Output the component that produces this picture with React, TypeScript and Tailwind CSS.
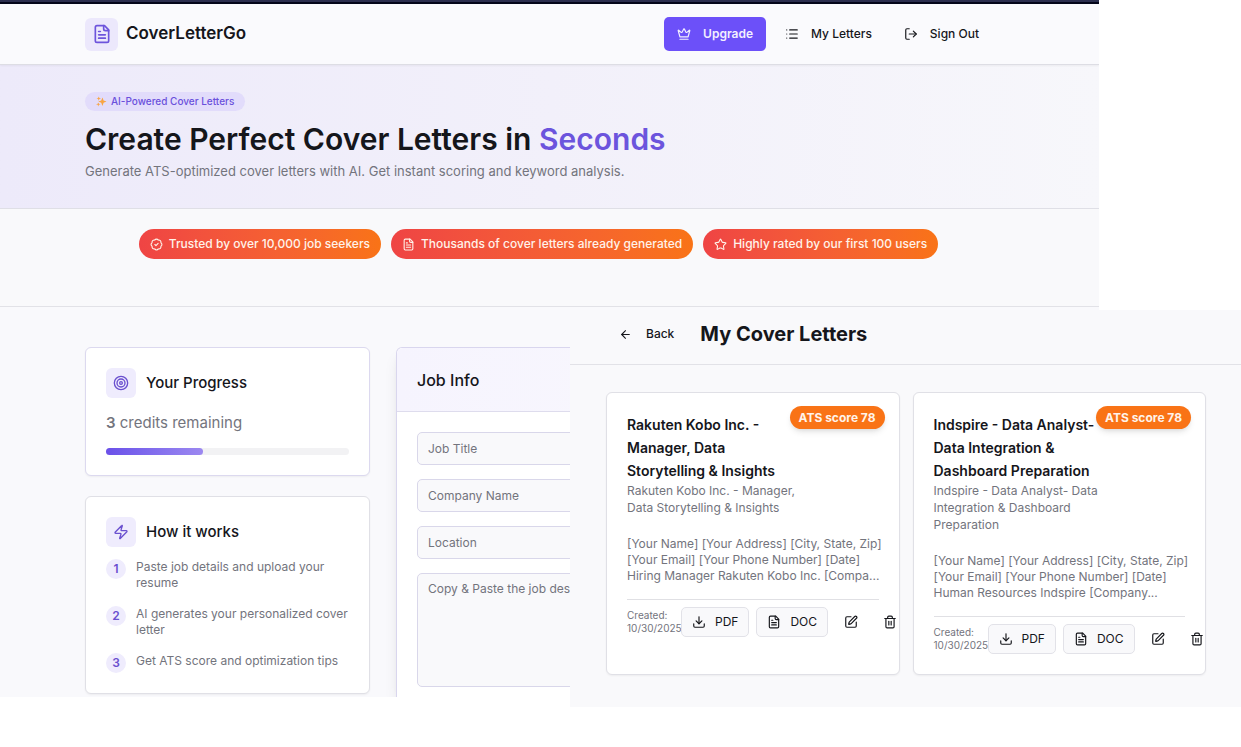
import React from "react"
import {
  ArrowLeft,
  BadgeCheck,
  Crown,
  Download,
  List,
  LogOut,
  Star,
  Target,
  Trash2,
  Zap,
} from "lucide-react"

type IconProps = { className?: string }

const FileIcon = ({ className }: IconProps) => (
  <svg
    className={className}
    viewBox="0 0 24 24"
    fill="none"
    stroke="currentColor"
    strokeWidth="2"
    strokeLinecap="round"
    strokeLinejoin="round"
  >
    <path d="M15 2H6a2 2 0 0 0-2 2v16a2 2 0 0 0 2 2h12a2 2 0 0 0 2-2V7Z" />
    <path d="M14 2v4a2 2 0 0 0 2 2h4" />
    <path d="M10 9H8" />
    <path d="M16 13H8" />
    <path d="M16 17H8" />
  </svg>
)

const EditIcon = ({ className }: IconProps) => (
  <svg
    className={className}
    viewBox="0 0 24 24"
    fill="none"
    stroke="currentColor"
    strokeWidth="2"
    strokeLinecap="round"
    strokeLinejoin="round"
  >
    <path d="M12 3H5a2 2 0 0 0-2 2v14a2 2 0 0 0 2 2h14a2 2 0 0 0 2-2v-7" />
    <path d="M18.375 2.625a1 1 0 0 1 3 3l-9.013 9.014a2 2 0 0 1-.853.505l-2.873.84a.5.5 0 0 1-.62-.62l.84-2.873a2 2 0 0 1 .506-.852z" />
  </svg>
)

const SparklesIcon = ({ className }: IconProps) => (
  <svg className={className} viewBox="0 0 24 24" fill="#f8a545">
    <path d="M14 3l2.6 6.8L23 12l-6.4 2.6L14 22l-2.6-7.4L5 12l6.4-2.2z" />
    <path d="M6 1l1.4 3.3L11 5.5 7.4 6.8 6 10.5 4.6 6.8 1 5.5l3.6-1.2z" />
    <path d="M5 14l1.3 2.9L10 18l-3.7 1.2L5 23l-1.3-3.8L0 18l3.7-1.1z" />
  </svg>
)

const badges = [
  { icon: BadgeCheck, text: "Trusted by over 10,000 job seekers" },
  { icon: FileIcon, text: "Thousands of cover letters already generated" },
  { icon: Star, text: "Highly rated by our first 100 users" },
]

const steps = [
  "Paste job details and upload your resume",
  "AI generates your personalized cover letter",
  "Get ATS score and optimization tips",
]

const letters = [
  {
    title: "Rakuten Kobo Inc. - Manager, Data Storytelling & Insights",
    body: "[Your Name] [Your Address] [City, State, Zip] [Your Email] [Your Phone Number] [Date] Hiring Manager Rakuten Kobo Inc. [Compa...",
  },
  {
    title: "Indspire - Data Analyst- Data Integration & Dashboard Preparation",
    body: "[Your Name] [Your Address] [City, State, Zip] [Your Email] [Your Phone Number] [Date] Human Resources Indspire [Company...",
  },
]

function Header() {
  return (
    <header className="relative flex h-[61px] items-center justify-between border-b border-[#dddde4] bg-[#fafafd] pr-[107px] pl-[85px] shadow-xs">
      <div className="flex items-center gap-2">
        <div className="flex size-[33px] items-center justify-center rounded-md bg-[#ece8fc] text-[#6d54dc]">
          <FileIcon className="size-5" />
        </div>
        <span className="text-[17px] font-semibold">CoverLetterGo</span>
      </div>
      <nav className="flex items-center gap-[6px] text-[12px] font-medium">
        <button className="flex h-[34px] items-center gap-3 rounded-[5px] bg-[#6c50f9] px-[13px] font-semibold text-[#f2efff]">
          <Crown className="size-[14px]" />
          Upgrade
        </button>
        <button className="flex h-[34px] items-center gap-3 px-[13px]">
          <List className="size-[14px]" />
          My Letters
        </button>
        <button className="flex h-[34px] items-center gap-3 px-[13px]">
          <LogOut className="size-[14px]" />
          Sign Out
        </button>
      </nav>
    </header>
  )
}

function Hero() {
  return (
    <section className="flex h-36 flex-col items-start border-b border-[#dfdfe6] bg-linear-to-r from-[#edeafa] via-[#f2f0fa] to-[#f7f7fb] pt-[27px] pl-[85px]">
      <span className="flex h-[19px] items-center gap-1 rounded-full bg-[#e2dcfb] px-[11px] text-[10px] font-medium text-[#6a50dc]">
        <SparklesIcon className="size-[11px]" />
        AI-Powered Cover Letters
      </span>
      <h1 className="mt-2 text-[30px] leading-10 font-semibold">
        Create Perfect Cover Letters in{" "}
        <span className="text-[#6c54dd]">Seconds</span>
      </h1>
      <p className="mt-[2px] text-[13px] leading-5 text-[#73747d]">
        Generate ATS-optimized cover letters with AI. Get instant scoring and
        keyword analysis.
      </p>
    </section>
  )
}

function TrustBar() {
  return (
    <section className="flex h-[98px] items-start justify-center gap-[10px] border-b border-[#e2e2e7] bg-[#f9f9fb] pt-5 pr-[22px]">
      {badges.map(({ icon: Icon, text }) => (
        <div
          key={text}
          className="flex h-[30px] items-center gap-[6px] rounded-full bg-linear-to-r from-[#ef4444] to-[#f97316] px-[11px] text-[12px] font-medium text-[#fff3ea]"
        >
          <Icon className="size-[13px]" />
          {text}
        </div>
      ))}
    </section>
  )
}

function Sidebar() {
  return (
    <aside className="flex w-[285px] shrink-0 flex-col gap-5 pb-[3px]">
      <div className="rounded-md border border-[#dcd9ef] bg-white p-5 shadow-xs">
        <div className="flex items-center gap-[10px]">
          <div className="flex size-[30px] items-center justify-center rounded-md bg-[#efecfd] text-[#6a50cf]">
            <Target className="size-4" />
          </div>
          <h2 className="text-[15px] font-medium">Your Progress</h2>
        </div>
        <p className="mt-[15px] text-[15px] leading-5 text-[#73747d]">
          <b className="font-semibold">3</b> credits remaining
        </p>
        <div className="mt-[15px] h-[7px] rounded-full bg-[#f2f2f4]">
          <div className="h-full w-2/5 rounded-full bg-linear-to-r from-[#6b50e9] to-[#9c88f0]" />
        </div>
      </div>

      <div className="rounded-md border border-[#e0e0e6] bg-white p-5 shadow-xs">
        <div className="flex items-center gap-[10px]">
          <div className="flex size-[30px] items-center justify-center rounded-md bg-[#efecfd] text-[#6a50cf]">
            <Zap className="size-4" />
          </div>
          <h2 className="text-[15px] font-medium">How it works</h2>
        </div>
        <ol className="mt-3 flex flex-col gap-[15px]">
          {steps.map((step, i) => (
            <li key={step} className="flex items-start gap-[10px]">
              <span className="flex size-5 shrink-0 items-center justify-center rounded-full bg-[#efecfd] text-[12px] font-semibold text-[#6a50cf]">
                {i + 1}
              </span>
              <p className="text-[12px] leading-4 text-[#73747d]">{step}</p>
            </li>
          ))}
        </ol>
      </div>
    </aside>
  )
}

const field =
  "block w-full rounded-[5px] border border-[#d9d7ea] bg-[#f9f9fb] px-[10px] text-[12px] placeholder:text-[#73747d]"

function JobForm() {
  return (
    <form className="flex-1 rounded-t-md border border-b-0 border-[#d9d6ee] bg-white shadow-lg">
      <div className="flex h-16 items-center rounded-t-md border-b border-[#dedced] bg-linear-to-r from-[#f6f4fe] to-[#fafafd] px-5">
        <h2 className="text-[16px] font-medium">Job Info</h2>
      </div>
      <div className="flex flex-col gap-[14px] px-5 pt-5">
        <input aria-label="Job Title" placeholder="Job Title" className={`${field} h-[33px]`} />
        <input aria-label="Company Name" placeholder="Company Name" className={`${field} h-[33px]`} />
        <input aria-label="Location" placeholder="Location" className={`${field} h-[33px]`} />
        <textarea
          aria-label="Job description"
          placeholder="Copy & Paste the job description"
          className={`${field} h-[114px] resize-none py-[6px]`}
        />
      </div>
    </form>
  )
}

function LetterCard({ title, body }: { title: string; body: string }) {
  return (
    <article className="relative min-w-0 rounded-md border border-[#e0e0e6] bg-white p-5 shadow-xs">
      <span className="absolute top-[13px] right-[14px] flex h-[23px] items-center rounded-full bg-[#f97316] px-[9px] text-[12px] font-bold text-[#fff3ea] shadow-md">
        ATS score 78
      </span>
      <div className="pr-20">
        <h3 className="text-[14px] leading-[23px] font-semibold">{title}</h3>
        <p className="text-[12px] leading-[17px] text-[#73747d]">{title}</p>
      </div>
      <p className="mt-5 -mr-3 text-[12px] leading-4 text-[#73747d]">{body}</p>
      <div className="mt-[15px] flex items-center border-t border-[#e0e0e4] pt-[7px]">
        <p className="w-[54px] shrink-0 text-[10px] leading-[13px] text-[#73747d]">
          Created: 10/30/2025
        </p>
        <div className="flex gap-[7px] text-[12px]">
          <button className="flex h-[30px] shrink-0 items-center gap-[9px] rounded-[5px] border border-[#e2e2e8] bg-[#f9f9fb] px-[10px]">
            <Download className="size-[14px]" />
            PDF
          </button>
          <button className="flex h-[30px] shrink-0 items-center gap-[9px] rounded-[5px] border border-[#e2e2e8] bg-[#f9f9fb] px-[10px]">
            <FileIcon className="size-[14px]" />
            DOC
          </button>
          <button aria-label="Edit letter" className="flex h-[30px] items-center px-[9px]">
            <EditIcon className="size-[14px]" />
          </button>
          <button aria-label="Delete letter" className="flex h-[30px] items-center px-[9px]">
            <Trash2 className="size-[14px]" />
          </button>
        </div>
      </div>
    </article>
  )
}

function LettersWindow() {
  return (
    <section className="absolute top-[310px] right-0 left-[570px] bg-[#f9f9fb]">
      <div className="flex h-[55px] items-center gap-[26px] border-b border-[#e2e2e7] pb-[6px] pl-[49px]">
        <button className="flex items-center gap-[14px] text-[12px] font-medium">
          <ArrowLeft className="size-[13px]" />
          Back
        </button>
        <h1 className="text-[20px] font-bold">My Cover Letters</h1>
      </div>
      <div className="grid grid-cols-2 gap-[13px] pt-[27px] pr-[35px] pb-8 pl-9">
        {letters.map((letter) => (
          <LetterCard key={letter.title} {...letter} />
        ))}
      </div>
    </section>
  )
}

function App() {
  return (
    <div className="relative overflow-hidden bg-white font-['Inter',sans-serif] text-[#15161b]">
      <div className="mr-[142px] overflow-hidden bg-[#f9f9fc]">
        <div className="h-1 border-b-2 border-[#04051a] bg-[#2b2e4e]" />
        <Header />
        <Hero />
        <TrustBar />
        <main className="flex gap-[26px] pt-10 pr-[107px] pl-[85px]">
          <Sidebar />
          <JobForm />
        </main>
      </div>
      <LettersWindow />
      <div className="h-[50px]" />
    </div>
  )
}

export default App
